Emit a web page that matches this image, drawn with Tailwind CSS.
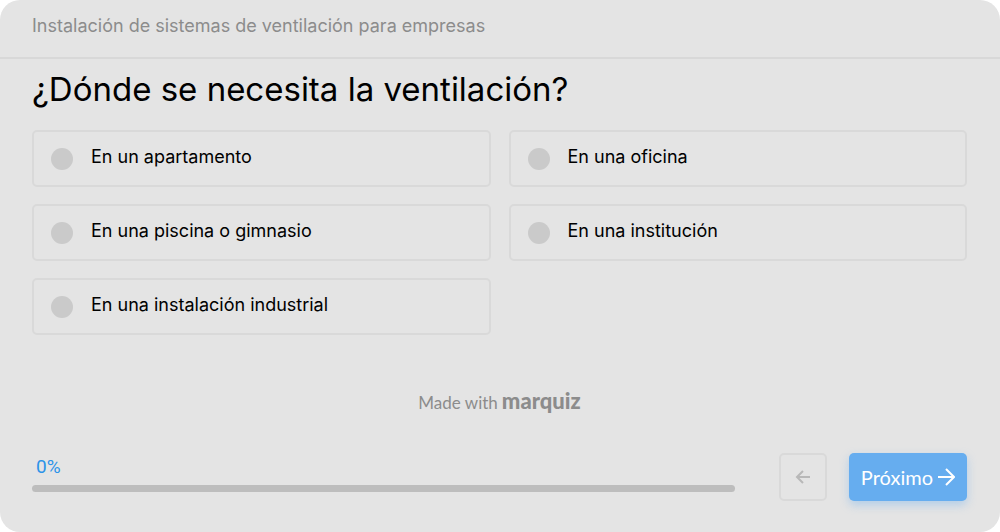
<!DOCTYPE html>
<html lang="es">
<head>
    <meta charset="UTF-8">
    <meta name="viewport" content="width=device-width, initial-scale=1.0">
    <title>Instalación de sistemas de ventilación para empresas</title>
    <script src="https://cdn.jsdelivr.net/npm/@tailwindcss/browser@4"></script>
</head>
<body class="bg-white font-['Inter',sans-serif] text-black">
    <form class="flex min-h-screen flex-col rounded-[20px] bg-[#e4e4e4]">
        <header class="border-b-2 border-[#d8d8d8] px-8 pt-3 pb-[17px]">
            <p class="text-lg leading-7 text-[#8c8c8c]">Instalación de sistemas de ventilación para empresas</p>
        </header>

        <main class="pt-2 pr-[33px] pl-8">
            <h1 id="question" class="text-[33px] leading-[44px]">¿Dónde se necesita la ventilación?</h1>

            <div role="radiogroup" aria-labelledby="question" class="mt-[19px] grid grid-cols-2 gap-x-[18px] gap-y-[17px]">
                <label class="flex h-[57px] items-center gap-[18px] rounded-[5px] border-2 border-[#d9d9d9] px-[17px]">
                    <input type="radio" name="place" class="size-[22px] appearance-none rounded-full bg-[#cacaca] checked:bg-[#2c93e8]">
                    <span class="pb-1 text-lg">En un apartamento</span>
                </label>
                <label class="flex h-[57px] items-center gap-[18px] rounded-[5px] border-2 border-[#d9d9d9] px-[17px]">
                    <input type="radio" name="place" class="size-[22px] appearance-none rounded-full bg-[#cacaca] checked:bg-[#2c93e8]">
                    <span class="pb-1 text-lg">En una oficina</span>
                </label>
                <label class="flex h-[57px] items-center gap-[18px] rounded-[5px] border-2 border-[#d9d9d9] px-[17px]">
                    <input type="radio" name="place" class="size-[22px] appearance-none rounded-full bg-[#cacaca] checked:bg-[#2c93e8]">
                    <span class="pb-1 text-lg">En una piscina o gimnasio</span>
                </label>
                <label class="flex h-[57px] items-center gap-[18px] rounded-[5px] border-2 border-[#d9d9d9] px-[17px]">
                    <input type="radio" name="place" class="size-[22px] appearance-none rounded-full bg-[#cacaca] checked:bg-[#2c93e8]">
                    <span class="pb-1 text-lg">En una institución</span>
                </label>
                <label class="flex h-[57px] items-center gap-[18px] rounded-[5px] border-2 border-[#d9d9d9] px-[17px]">
                    <input type="radio" name="place" class="size-[22px] appearance-none rounded-full bg-[#cacaca] checked:bg-[#2c93e8]">
                    <span class="pb-1 text-lg">En una instalación industrial</span>
                </label>
            </div>
        </main>

        <footer class="mt-auto pr-[33px] pb-[31px] pl-8">
            <p class="flex items-baseline justify-center gap-1 text-[#8c8c8c]">
                <span class="font-['Lato',sans-serif] text-[17px]">Made with</span>
                <a href="#" class="font-['Lato',sans-serif] text-[22px] leading-7 font-black">marquiz</a>
            </p>
            <div class="mt-[38px] flex items-end">
                <div class="mr-11 flex-1 pb-[9px]">
                    <p class="px-1 font-['Roboto',sans-serif] text-[19px] leading-7 text-[#2c93e8]">0%</p>
                    <div role="progressbar" aria-valuenow="0" aria-valuemin="0" aria-valuemax="100" aria-label="Progreso" class="mt-1 h-[7px] rounded-sm bg-[#bdbdbd]"></div>
                </div>
                <button type="button" aria-label="Anterior" class="mr-[22px] flex size-12 items-center justify-center rounded-[5px] border-2 border-[#d9d9d9] text-[#b8b8b8]">
                    <svg class="size-4" viewBox="0 0 16 16" fill="none" stroke="currentColor" stroke-width="2">
                        <path d="M15 8H3M8 2L2 8L8 14"/>
                    </svg>
                </button>
                <button type="button" class="flex h-12 items-center gap-1 rounded-[5px] bg-[#66adef] px-3 font-['Lato',sans-serif] text-xl text-white shadow-[0_4px_10px_#66adef66]">
                    Próximo
                    <svg class="size-[18px]" viewBox="0 0 18 18" fill="none" stroke="currentColor" stroke-width="2">
                        <path d="M1 9H16M9 1L17 9L9 17"/>
                    </svg>
                </button>
            </div>
        </footer>
    </form>
</body>
</html>
